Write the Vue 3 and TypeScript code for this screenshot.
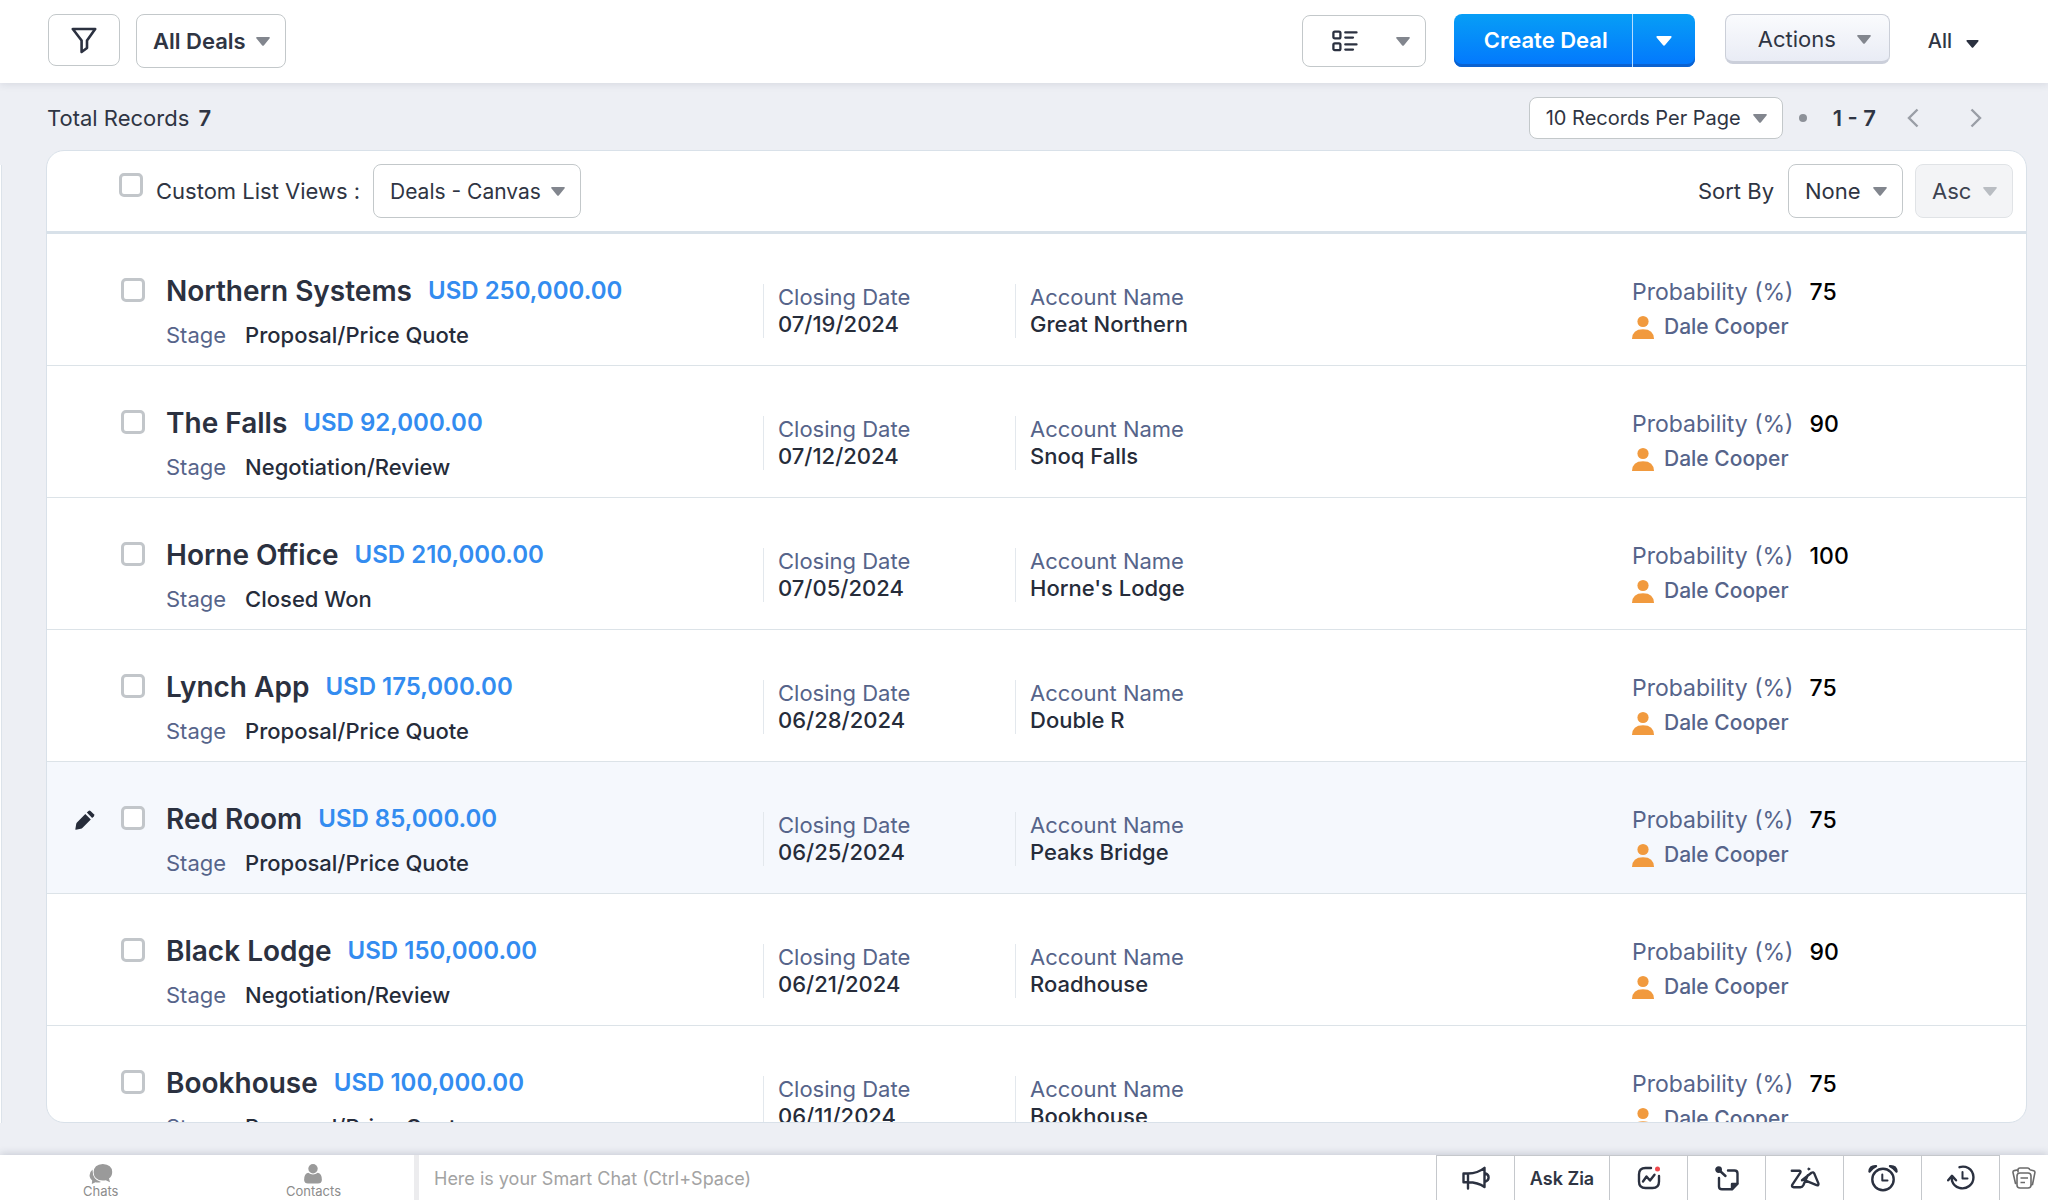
<script setup lang="ts">
import { ref } from 'vue'

interface Deal {
  name: string
  amount: string
  stage: string
  closing: string
  account: string
  probability: number
  owner: string
}

const deals: Deal[] = [
  { name: 'Northern Systems', amount: 'USD 250,000.00', stage: 'Proposal/Price Quote', closing: '07/19/2024', account: 'Great Northern', probability: 75, owner: 'Dale Cooper' },
  { name: 'The Falls', amount: 'USD 92,000.00', stage: 'Negotiation/Review', closing: '07/12/2024', account: 'Snoq Falls', probability: 90, owner: 'Dale Cooper' },
  { name: 'Horne Office', amount: 'USD 210,000.00', stage: 'Closed Won', closing: '07/05/2024', account: "Horne's Lodge", probability: 100, owner: 'Dale Cooper' },
  { name: 'Lynch App', amount: 'USD 175,000.00', stage: 'Proposal/Price Quote', closing: '06/28/2024', account: 'Double R', probability: 75, owner: 'Dale Cooper' },
  { name: 'Red Room', amount: 'USD 85,000.00', stage: 'Proposal/Price Quote', closing: '06/25/2024', account: 'Peaks Bridge', probability: 75, owner: 'Dale Cooper' },
  { name: 'Black Lodge', amount: 'USD 150,000.00', stage: 'Negotiation/Review', closing: '06/21/2024', account: 'Roadhouse', probability: 90, owner: 'Dale Cooper' },
  { name: 'Bookhouse', amount: 'USD 100,000.00', stage: 'Proposal/Price Quote', closing: '06/11/2024', account: 'Bookhouse', probability: 75, owner: 'Dale Cooper' },
]

const active = ref(4)
const message = ref('')
</script>

<template>
  <div class="app">
    <header class="topbar">
      <button class="box filter" type="button" aria-label="Filter">
        <svg width="26" height="28" viewBox="0 0 26 28" fill="none" stroke="#2b3140" stroke-width="2.6" stroke-linejoin="round">
          <path d="M1.8 3H24.2L16 14.5V22L10.6 26V14.5Z" />
        </svg>
      </button>
      <div class="pick pick-view">
        <select aria-label="View"><option>All Deals</option></select>
        <svg class="caret" viewBox="0 0 14 9"><path d="M1 0H13Q14.400 .4 13.500 1.600L8 8.200Q7 9.400 6 8.200L.5 1.600Q-.4 .4 1 0Z" /></svg>
      </div>
      <div class="spacer"></div>
      <button class="box layout" type="button" aria-label="Layout">
        <svg width="26" height="22" viewBox="0 0 26 22" fill="none" stroke="#2b3140" stroke-width="2.300" stroke-linecap="round">
          <rect x="1.400" y="1.600" width="7" height="6.800" rx="1.400" />
          <rect x="1.400" y="13.400" width="7" height="6.800" rx="1.400" />
          <path d="M13.300 2.400H24.500M13.300 7.600H21M13.300 14.400H24.500M13.300 19.600H21" />
        </svg>
        <svg class="tri" viewBox="0 0 14 9"><path d="M1 0H13Q14.400 .4 13.500 1.600L8 8.200Q7 9.400 6 8.200L.5 1.600Q-.4 .4 1 0Z" /></svg>
      </button>
      <div class="create">
        <button class="create-main" type="button">Create Deal</button>
        <button class="create-more" type="button" aria-label="More create options">
          <svg width="16" height="10" viewBox="0 0 14 9" fill="#fff"><path d="M1 0H13Q14.400 .4 13.500 1.600L8 8.200Q7 9.400 6 8.200L.5 1.600Q-.4 .4 1 0Z" /></svg>
        </button>
      </div>
      <button class="actions" type="button">
        Actions
        <svg class="tri" viewBox="0 0 14 9"><path d="M1 0H13Q14.400 .4 13.500 1.600L8 8.200Q7 9.400 6 8.200L.5 1.600Q-.4 .4 1 0Z" /></svg>
      </button>
      <button class="all" type="button">
        All
        <svg width="13" height="8" viewBox="0 0 14 9" fill="#2b3140"><path d="M1 0H13Q14.400 .4 13.500 1.600L8 8.200Q7 9.400 6 8.200L.5 1.600Q-.4 .4 1 0Z" /></svg>
      </button>
    </header>

    <div class="body">
      <div class="rail"></div>
      <main class="content">
        <div class="summary">
          <span>Total Records <b>7</b></span>
          <div class="spacer"></div>
          <div class="pick pick-page">
            <select aria-label="Records per page"><option>10 Records Per Page</option></select>
            <svg class="caret" viewBox="0 0 14 9"><path d="M1 0H13Q14.400 .4 13.500 1.600L8 8.200Q7 9.400 6 8.200L.5 1.600Q-.4 .4 1 0Z" /></svg>
          </div>
          <i class="dot"></i>
          <b class="range">1 - 7</b>
          <button class="page" type="button" aria-label="Previous page">
            <svg width="12" height="20" viewBox="0 0 12 20"><path d="M10.500 1.500L2 10L10.500 18.500" /></svg>
          </button>
          <button class="page" type="button" aria-label="Next page">
            <svg width="12" height="20" viewBox="0 0 12 20"><path d="M1.500 1.500L10 10L1.500 18.500" /></svg>
          </button>
        </div>

        <section class="card">
          <div class="card-head">
            <input class="check" type="checkbox" aria-label="Select all deals" />
            <label class="views" for="list-view">Custom List Views :</label>
            <div class="pick pick-list">
              <select id="list-view"><option>Deals - Canvas</option></select>
              <svg class="caret" viewBox="0 0 14 9"><path d="M1 0H13Q14.400 .4 13.500 1.600L8 8.200Q7 9.400 6 8.200L.5 1.600Q-.4 .4 1 0Z" /></svg>
            </div>
            <div class="spacer"></div>
            <label class="sort" for="sort-by">Sort By</label>
            <div class="pick pick-sort">
              <select id="sort-by"><option>None</option></select>
              <svg class="caret" viewBox="0 0 14 9"><path d="M1 0H13Q14.400 .4 13.500 1.600L8 8.200Q7 9.400 6 8.200L.5 1.600Q-.4 .4 1 0Z" /></svg>
            </div>
            <div class="pick pick-order">
              <select aria-label="Sort order" disabled><option>Asc</option></select>
              <svg class="caret" viewBox="0 0 14 9"><path d="M1 0H13Q14.400 .4 13.500 1.600L8 8.200Q7 9.400 6 8.200L.5 1.600Q-.4 .4 1 0Z" /></svg>
            </div>
          </div>

          <ul class="rows">
            <li v-for="(deal, i) in deals" :key="deal.name" class="row" :class="{ active: i === active }" @mouseenter="active = i">
              <div class="edit-cell">
                <button v-if="i === active" class="edit" type="button" :aria-label="'Edit ' + deal.name">
                  <svg width="20" height="20" viewBox="0 0 20 20" fill="#262c3a">
                    <path d="M.3 19.500L1.200 14Q1.400 13 2.200 12.200L10.300 4L15.800 9.500L7.600 17.700Q6.800 18.500 5.800 18.700L.8 19.700Z" />
                    <path d="M11.800 2.600L13.500 .9Q14.500 0 15.500 .9L18.900 4.300Q19.800 5.300 18.900 6.300L17.200 8Z" />
                  </svg>
                </button>
              </div>
              <div class="check-cell"><input class="check" type="checkbox" :aria-label="'Select ' + deal.name" /></div>
              <div class="main">
                <div class="title">
                  <a class="name" href="#">{{ deal.name }}</a>
                  <span class="amount">{{ deal.amount }}</span>
                </div>
                <div class="stage"><span>Stage</span><span class="value">{{ deal.stage }}</span></div>
              </div>
              <div class="field"><div class="fact"><div>Closing Date</div><div class="value">{{ deal.closing }}</div></div></div>
              <div class="field"><div class="fact"><div>Account Name</div><div class="value">{{ deal.account }}</div></div></div>
              <div class="odds">
                <div class="prob">Probability (%)<span>{{ deal.probability }}</span></div>
                <div class="owner">
                  <svg width="22" height="24" viewBox="0 0 22 24" fill="#f19a3e">
                    <circle cx="11" cy="6.500" r="5.600" />
                    <path d="M0 24Q.2 14.200 11 14.200T22 24Z" />
                  </svg>
                  {{ deal.owner }}
                </div>
              </div>
            </li>
          </ul>
        </section>
      </main>
    </div>

    <footer class="dock">
      <nav class="tabs">
        <button type="button">
          <svg width="24" height="20" viewBox="0 0 24 20" fill="#9a9a9a">
            <path d="M13.800 0Q23 .4 23.200 8Q23.200 12 20 14.500L21 18.200L16.800 16.200Q15.300 16.600 13.800 16.600Q4.800 16.200 4.600 8.300Q4.800 .4 13.800 0Z" />
            <path d="M3.600 5.600Q-.2 8.600 .8 13Q1.200 14.800 3.200 16.400L2.800 20L6.500 18.300Q9.500 19 12 17.900Q3.200 15.800 3.600 5.600Z" />
          </svg>
          Chats
        </button>
        <button type="button">
          <svg width="18" height="20" viewBox="0 0 18 20" fill="#9a9a9a">
            <ellipse cx="9" cy="4.700" rx="4.700" ry="4.700" />
            <path d="M4.200 8.800Q9 12.400 13.800 8.800Q18 9.800 17.900 16Q17.600 19.600 14 19.600H4Q.4 19.600 .1 16Q0 9.800 4.200 8.800Z" />
          </svg>
          Contacts
        </button>
      </nav>
      <input v-model="message" class="smart" type="text" aria-label="Smart Chat" placeholder="Here is your Smart Chat (Ctrl+Space)" />
      <div class="tools">
        <button type="button" aria-label="Announcements">
          <svg width="28" height="24" viewBox="0 0 28 24">
            <path d="M1.500 7.500H6Q16 7.200 22.500 1.800V21Q16 16.200 6 16.200H1.500ZM6 7.500V22.500M23.500 7.500Q26.600 8.500 26.600 11.500T23.500 15.500" />
          </svg>
        </button>
        <button class="zia" type="button">Ask Zia</button>
        <button type="button" aria-label="Signals">
          <svg width="24" height="24" viewBox="0 0 24 24">
            <path d="M14 2H8.500Q2 2 2 8.500V15.500Q2 22 8.500 22H15.500Q22 22 22 15.500V10M6 15.500L9.500 10.500L13 14.500L17.500 8.800" />
            <circle cx="20.500" cy="3" r="2.500" fill="#f0494d" stroke="none" />
          </svg>
        </button>
        <button type="button" aria-label="Sticky notes">
          <svg width="24" height="25" viewBox="0 0 24 25">
            <path d="M4 12V20.500Q4 23.300 7 23.300H17L22.500 17.500V7.500Q22.500 4.500 19.500 4.500H13M4 4L10.500 10" />
            <circle cx="3.600" cy="3.600" r="2.200" fill="#2b3140" />
            <path d="M17 23V18H22.300Z" fill="#2b3140" />
          </svg>
        </button>
        <button type="button" aria-label="Zia">
          <svg width="30" height="22" viewBox="0 0 30 22">
            <path d="M1.800 3.800H9.500Q11.200 4 10.200 5.800L2.200 17.800Q1.400 20 3.800 20.200H10.500Q12.300 20.200 13.300 18.300L17.800 8.200M12 13.200L21.500 5.800Q23.400 4.600 24.300 6.600L28.400 16.400Q28.800 18.800 26.600 18.200L13.800 12.800" />
            <circle cx="18.800" cy="2" r="1" fill="#2b3140" stroke-width="1" />
          </svg>
        </button>
        <button type="button" aria-label="Reminders">
          <svg width="30" height="28" viewBox="0 0 30 28">
            <circle cx="15" cy="15.500" r="10.700" />
            <path d="M14.300 10.500V16.500H19.500" stroke-width="2" />
            <path d="M1.500 7.500Q2 1.800 8 2.200Q4 4 1.500 7.500ZM28.500 7.500Q28 1.800 22 2.200Q26 4 28.500 7.500Z" fill="#2b3140" />
          </svg>
        </button>
        <button type="button" aria-label="Recent">
          <svg width="28" height="26" viewBox="0 0 28 26">
            <path d="M12.500 2.200Q17 .8 21.300 3A11 11 0 1 1 5 15.800V11M1.200 15.300L5 10.800L9 15.300" />
            <path d="M15.500 7V13.500H20.500" stroke-width="2" />
          </svg>
        </button>
      </div>
      <button class="drawer" type="button" aria-label="Windows">
        <svg width="24" height="22" viewBox="0 0 24 22" fill="none" stroke="#6b6b6b" stroke-width="1.600" stroke-linejoin="round">
          <path d="M4.500 15.500L3.500 16.500L1 5.500Q.8 4 2.200 3.600L6 2.700M6 5.500V3Q6 1 8 1H15.500Q17.500 1 17.700 3M17.700 2.800L21.700 3.700Q23.200 4.200 22.900 5.700L20.500 17.500L19 18" />
          <rect x="5" y="6" width="14" height="15" rx="3" fill="#fff" />
          <path d="M8.500 11H16M8.500 15.500H13" />
        </svg>
      </button>
    </footer>
  </div>
</template>

<style>
body {
  background: #edeff4;
}
</style>

<style scoped>
.app {
  display: flex;
  flex-direction: column;
  height: 100vh;
  overflow: hidden;
  font-family: Inter, "Liberation Sans", sans-serif;
  font-size: 22px;
  color: #2f3543;
  background: #edeff4;
}
.app * {
  box-sizing: border-box;
}
button,
select,
input {
  font: inherit;
  color: inherit;
  margin: 0;
}
button {
  padding: 0;
  border: 0;
  background: none;
}
.spacer {
  flex: 1;
}

.topbar {
  display: flex;
  align-items: flex-start;
  height: 83px;
  flex: none;
  padding: 14px 69px 0 48px;
  background: #fff;
  box-shadow: 0 1px 8px rgba(40, 50, 80, 0.12);
  z-index: 1;
}
.box {
  display: flex;
  align-items: center;
  height: 52px;
  border: 1px solid #c3c8ca;
  border-radius: 8px;
  background: #fff;
}
.filter {
  width: 72px;
  justify-content: center;
  margin-right: 16px;
}
.layout {
  width: 124px;
  margin: 1px 28px 0 0;
  padding: 0 15px 0 29px;
  justify-content: space-between;
}
.tri {
  width: 14px;
  height: 9px;
  fill: #82868e;
}

.pick {
  position: relative;
  height: 54px;
}
.pick select {
  appearance: none;
  width: 100%;
  height: 100%;
  padding: 0 0 0 16px;
  border: 1px solid #c3c8ca;
  border-radius: 8px;
  background: #fff;
}
.caret {
  position: absolute;
  top: 50%;
  right: 16px;
  width: 14px;
  height: 9px;
  margin-top: -4px;
  fill: #82868e;
  pointer-events: none;
}
.pick-view {
  width: 150px;
  font-weight: 600;
}
.pick-page {
  width: 254px;
  height: 42px;
  font-size: 20px;
}
.pick-list {
  width: 208px;
  font-size: 21px;
}
.pick-sort {
  width: 115px;
}
.pick-order {
  width: 98px;
}
.pick-order select {
  background: #f3f4f6;
  border-color: #e0e3e6;
  color: #3c4250;
  opacity: 1;
}
.pick-order .caret {
  fill: #b9bdc2;
}

.create {
  display: flex;
  height: 53px;
  margin-right: 30px;
  border-radius: 8px;
  overflow: hidden;
  background: linear-gradient(#079ef6, #0377fd);
  box-shadow: inset 0 -3px 0 #0b62d0;
}
.create-main {
  width: 179px;
  padding: 0 0 2px 6px;
  border-right: 1px solid #b5dcff;
  color: #fff;
  font-weight: 600;
}
.create-more {
  display: flex;
  align-items: center;
  justify-content: center;
  width: 62px;
}
.actions {
  display: flex;
  align-items: center;
  justify-content: space-between;
  width: 165px;
  height: 50px;
  margin-right: 38px;
  padding: 2px 18px 0 32px;
  border: 1px solid #cbcfd8;
  border-bottom: 3px solid #cbcfda;
  border-radius: 8px;
  background: linear-gradient(#fafbfd, #e9ecf5);
}
.all {
  display: flex;
  align-items: center;
  gap: 14px;
  height: 54px;
  font-size: 20px;
  font-weight: 500;
}
.all svg {
  margin-top: 6px;
}

.body {
  display: flex;
  flex: 1;
  min-height: 0;
}
.rail {
  width: 2px;
  margin: 82px 44px 32px 0;
  background: #fff;
  border-right: 1px solid #dce3ea;
}
.content {
  display: flex;
  flex: 1;
  flex-direction: column;
  min-width: 0;
  padding: 0 21px 32px 0;
}
.summary {
  display: flex;
  align-items: center;
  height: 67px;
  flex: none;
  padding: 3px 45px 0 1px;
}
.summary b {
  font-weight: 600;
  margin-left: 3px;
}
.dot {
  width: 8px;
  height: 8px;
  margin: 0 22px 0 16px;
  border-radius: 50%;
  background: #8d9198;
}
.summary .range {
  margin: 0 31px 0 4px;
}
.page {
  display: flex;
}
.page + .page {
  margin-left: 51px;
}
.page path {
  fill: none;
  stroke: #9a9ea6;
  stroke-width: 2.4;
}

.card {
  display: flex;
  flex-direction: column;
  flex: 1;
  min-height: 0;
  overflow: hidden;
  border: 1px solid #d9e1e9;
  border-radius: 18px;
  background: #fff;
}
.card-head {
  display: flex;
  align-items: center;
  height: 83px;
  flex: none;
  padding: 0 13px 0 72px;
  border-bottom: 3px solid #d8e1e9;
}
.check {
  appearance: none;
  display: block;
  flex: none;
  width: 24px;
  height: 24px;
  border: 3px solid #c2c6ca;
  border-radius: 5px;
  background: #fff;
}
.card-head .check {
  margin-bottom: 12px;
}
.views {
  width: 230px;
  padding-left: 13px;
  white-space: nowrap;
}
.sort {
  margin-right: 14px;
}
.pick-sort {
  margin-right: 12px;
}

.rows {
  flex: 1;
  min-height: 0;
  margin: 0;
  padding: 0;
  overflow: hidden;
  list-style: none;
}
.row {
  display: grid;
  grid-template-columns: 74px 45px minmax(0, 597fr) minmax(0, 252fr) minmax(0, 617fr) minmax(0, 394fr);
  align-items: start;
  height: 132px;
  border-bottom: 1px solid #dce3e8;
  color: #56648a;
  white-space: nowrap;
}
.row.active {
  background: #f5f8fd;
}
.edit-cell {
  padding: 48px 0 0 28px;
}
.edit {
  display: block;
}
.edit svg {
  display: block;
}
.check-cell {
  padding-top: 44px;
}
.title {
  display: flex;
  align-items: center;
  gap: 16px;
  padding-top: 39px;
  line-height: 36px;
}
.name {
  color: #2b3140;
  font-size: 28px;
  font-weight: 600;
  text-decoration: none;
}
.amount {
  color: #338cf0;
  font-size: 24px;
  font-weight: 600;
}
.stage {
  display: flex;
  gap: 19px;
  padding-top: 12px;
  line-height: 28px;
}
.value {
  color: #262c3a;
  font-weight: 500;
}
.field {
  padding-top: 50px;
}
.fact {
  padding-left: 14px;
  border-left: 1px solid #e3e8ed;
  line-height: 27px;
}
.odds {
  padding-top: 42px;
}
.prob {
  font-size: 23px;
  line-height: 32px;
}
.prob span {
  margin-left: 16px;
  color: #000;
  font-weight: 500;
}
.owner {
  display: flex;
  align-items: center;
  gap: 10px;
  padding-top: 5px;
  font-size: 21px;
  font-weight: 500;
  line-height: 28px;
}

.dock {
  display: flex;
  height: 45px;
  flex: none;
  background: #fff;
  box-shadow: 0 -1px 8px rgba(40, 50, 80, 0.2);
}
.tabs {
  display: flex;
  justify-content: space-between;
  width: 414px;
  flex: none;
  padding: 0 73px 0 83px;
}
.tabs button {
  display: flex;
  flex-direction: column;
  align-items: center;
  padding-top: 9px;
  color: #8c8c8c;
  font-size: 13px;
  line-height: 15px;
}
.tabs svg {
  flex: none;
}
.smart {
  flex: 1;
  min-width: 0;
  padding: 2px 16px 0 15px;
  border: 0;
  border-left: 5px solid #ececee;
  outline: 0;
  background: #fff;
  font-size: 18px;
}
.smart::placeholder {
  color: #a3a3a3;
  opacity: 1;
}
.tools {
  display: flex;
  border-top: 1px solid #c5c8cc;
  border-right: 1px solid #c5c8cc;
}
.tools button {
  display: flex;
  align-items: center;
  justify-content: center;
  width: 78px;
  border-left: 1px solid #c5c8cc;
}
.tools svg {
  fill: none;
  stroke: #2b3140;
  stroke-width: 2.4;
  stroke-linejoin: round;
  stroke-linecap: round;
}
.tools .zia {
  width: 95px;
  font-size: 18px;
  font-weight: 600;
}
.drawer {
  display: flex;
  align-items: center;
  justify-content: center;
  width: 48px;
}
</style>
